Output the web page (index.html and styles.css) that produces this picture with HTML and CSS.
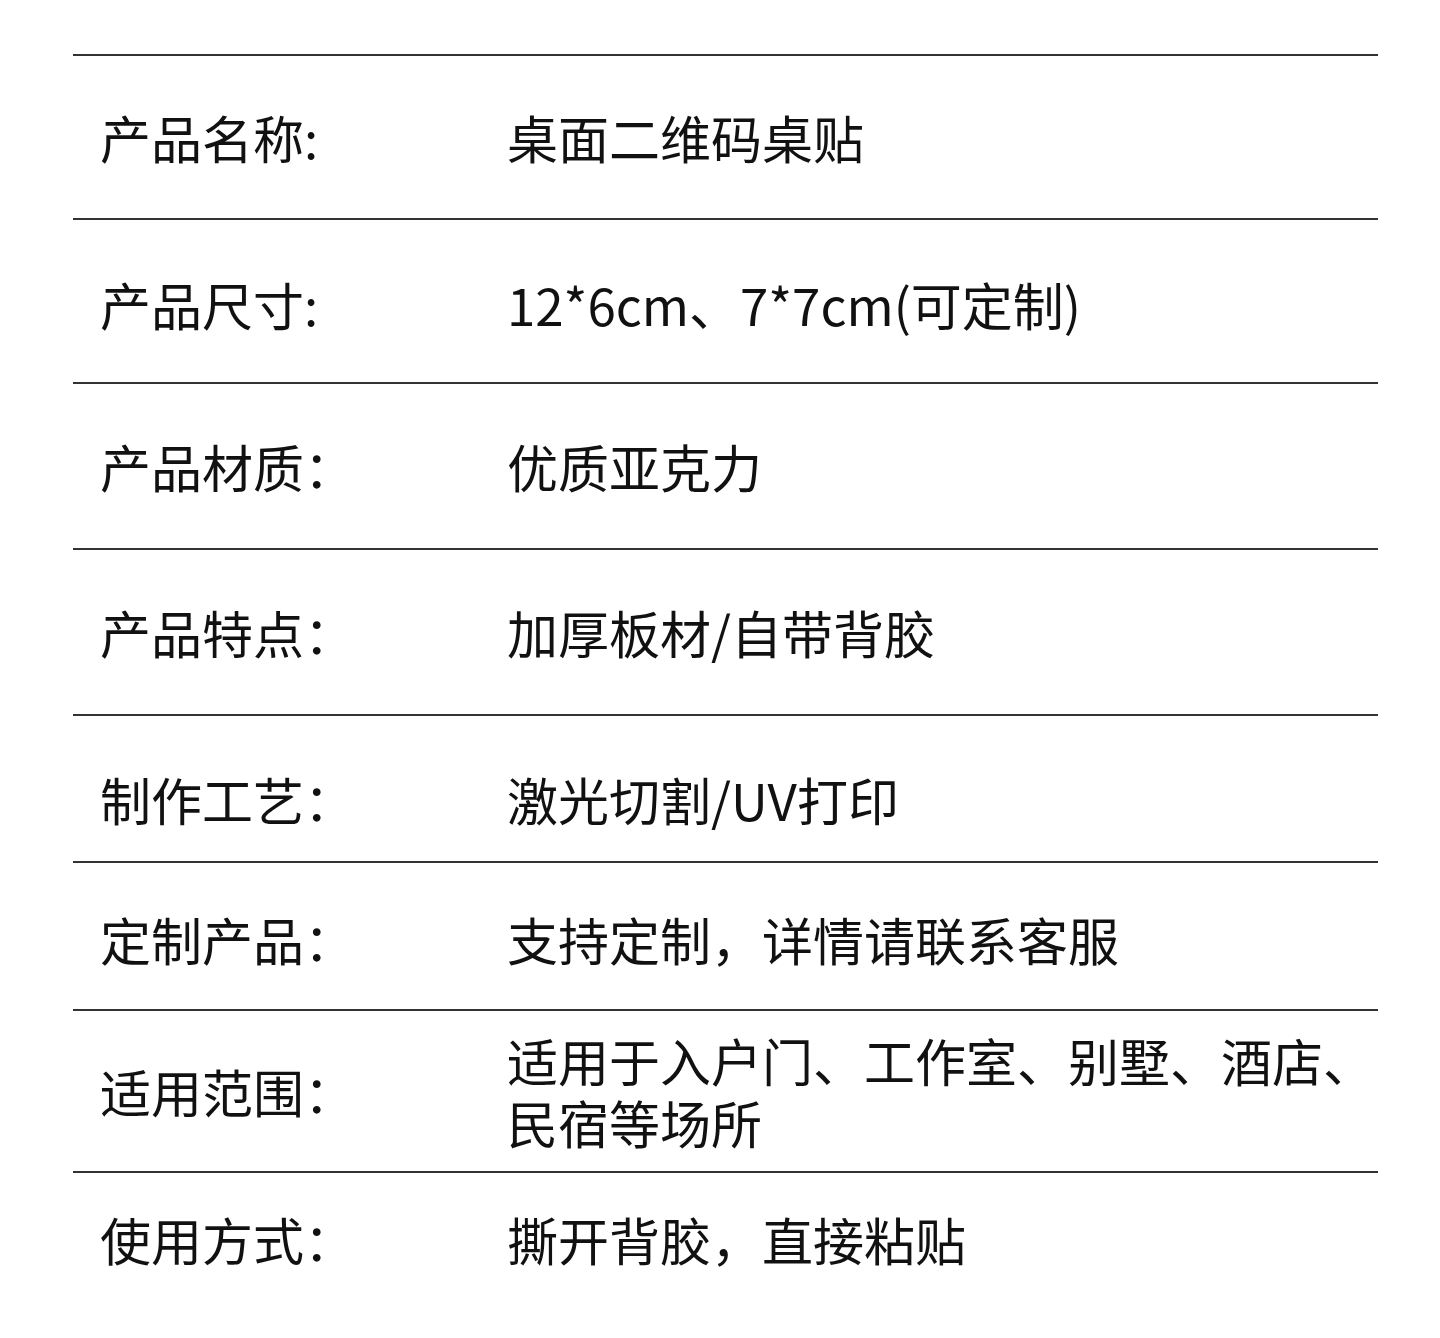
FILE: index.html
```html
<!DOCTYPE html>
<html lang="zh-CN">
<head>
<meta charset="utf-8">
<title>产品参数</title>
<link rel="stylesheet" href="styles.css">
</head>
<body>
<div class="spec">
  <div class="row r1"><div class="label">产品名称:</div><div class="value">桌面二维码桌贴</div></div>
  <div class="row r2"><div class="label">产品尺寸:</div><div class="value">12*6cm、7*7cm(可定制)</div></div>
  <div class="row r3"><div class="label">产品材质：</div><div class="value">优质亚克力</div></div>
  <div class="row r4"><div class="label">产品特点：</div><div class="value">加厚板材/自带背胶</div></div>
  <div class="row r5"><div class="label">制作工艺：</div><div class="value">激光切割/UV打印</div></div>
  <div class="row r6"><div class="label">定制产品：</div><div class="value">支持定制，详情请联系客服</div></div>
  <div class="row r7"><div class="label">适用范围：</div><div class="value">适用于入户门、工作室、别墅、酒店、<br>民宿等场所</div></div>
  <div class="row r8 last"><div class="label">使用方式：</div><div class="value">撕开背胶，直接粘贴</div></div>
</div>
</body>
</html>
```
FILE: styles.css
```css
html, body {
  margin: 0;
  padding: 0;
  background: #ffffff;
}
body {
  width: 1440px;
  height: 1338px;
  overflow: hidden;
  font-family: "Noto Sans CJK SC", "Noto Sans", sans-serif;
  color: #111111;
}
.spec {
  margin: 54px 0 0 73px;
  width: 1305px;
}
.row {
  box-sizing: border-box;
  border-top: 2px solid #333333;
  display: grid;
  grid-template-columns: 434px 1fr;
  align-items: center;
  font-size: 51px;
  line-height: 62px;
}
.label {
  padding-left: 27px;
}
.r1 { height: 164px; }
.r2 { height: 164px; padding-top: 6px; }
.r3 { height: 166px; }
.r4 { height: 166px; }
.r5 { height: 147px; padding-top: 21px; }
.r6 { height: 148px; padding-top: 6px; }
.r7 { height: 162px; }
.r8 { height: 166px; padding-bottom: 32px; }
```
